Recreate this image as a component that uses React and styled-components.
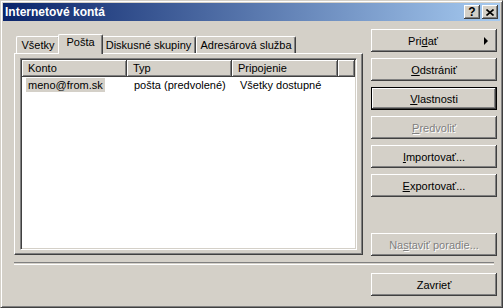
import React from "react"
import styled, { createGlobalStyle, css } from "styled-components"

const GlobalStyle = createGlobalStyle`
  body {
    margin: 0;
    background: #d4d0c8;
    font-family: "Liberation Sans", Arial, sans-serif;
    font-size: 11px;
  }
`

const raised = css`
  background: #d4d0c8;
  box-shadow: inset -1px -1px #404040, inset 1px 1px #fff, inset -2px -2px #808080;
`

const Window = styled.div`
  width: 503px;
  height: 308px;
  box-sizing: border-box;
  background: #d4d0c8;
  border: 1px solid;
  border-color: #d4d0c8 #404040 #404040 #d4d0c8;
  box-shadow: inset 1px 1px #fff, inset -1px -1px #808080;
  padding: 2px;
  display: flex;
  flex-direction: column;
`

const TitleBar = styled.div`
  height: 18px;
  display: flex;
  align-items: center;
  padding: 0 2px;
  background: linear-gradient(to right, #0a246a, #a6caf0);
`

const Title = styled.span`
  flex: 1;
  color: #fff;
  font-weight: bold;
  font-size: 12px;
`

const TitleButton = styled.div`
  ${raised}
  width: 16px;
  height: 14px;
  margin-left: ${p => p.$gap || 0}px;
  display: flex;
  align-items: center;
  justify-content: center;
  font-weight: bold;
  font-size: 12px;
  line-height: 14px;
  color: #000;
`

const Body = styled.div`
  flex: 1;
  display: flex;
  flex-direction: column;
  padding: 8px 3px 0 11px;
`

const TopSection = styled.div`
  display: flex;
  gap: 8px;
`

const TabControl = styled.div`
  width: 349px;
  margin-top: 5px;
  display: flex;
  flex-direction: column;
`

const TabRow = styled.div`
  height: 19px;
  display: flex;
  align-items: flex-end;
  padding-left: 2px;
`

const Tab = styled.div`
  position: relative;
  box-sizing: border-box;
  width: ${p => p.$w}px;
  height: 17px;
  background: #d4d0c8;
  border-top: 1px solid #fff;
  border-left: 1px solid #fff;
  border-right: 1px solid #404040;
  border-radius: 2px 2px 0 0;
  box-shadow: inset -1px 0 #808080;
  display: flex;
  justify-content: center;
  line-height: 15px;
  padding-top: 1px;
  ${p => p.$active && css`
    height: 20px;
    margin: 0 -2px -1px;
    padding-top: 0;
    z-index: 1;
  `}
`

const Panel = styled.div`
  height: 202px;
  box-sizing: border-box;
  border-top: 1px solid #fff;
  border-left: 1px solid #fff;
  border-right: 1px solid #404040;
  border-bottom: 1px solid #404040;
  box-shadow: inset -1px -1px #808080;
  padding: 4px 5px 4px 5px;
  display: flex;
`

const ListView = styled.div`
  flex: 1;
  background: #fff;
  border: 1px solid;
  border-color: #808080 #fff #fff #808080;
  box-shadow: inset 1px 1px #404040, inset -1px -1px #d4d0c8;
  padding: 1px;
  display: flex;
  flex-direction: column;
`

const HeaderRow = styled.div`
  display: flex;
  height: 17px;
`

const HeaderCell = styled.div`
  ${raised}
  box-sizing: border-box;
  width: ${p => (p.$w ? `${p.$w}px` : "auto")};
  flex: ${p => (p.$w ? "none" : 1)};
  padding-left: 6px;
  line-height: 16px;
`

const Row = styled.div`
  display: flex;
  height: 14px;
  margin-top: 1px;
  line-height: 14px;
`

const Cell = styled.div`
  width: ${p => p.$w}px;
  padding-left: ${p => p.$pad}px;
  box-sizing: border-box;
  white-space: nowrap;
`

const Selected = styled.span`
  display: inline-block;
  background: #d4d0c8;
  padding: 0 2px;
`

const ButtonColumn = styled.div`
  width: 126px;
  height: 227px;
  display: flex;
  flex-direction: column;
  gap: 6px;
`

const Button = styled.button`
  position: relative;
  width: 126px;
  height: 23px;
  flex: none;
  box-sizing: border-box;
  border: none;
  padding: 0;
  font-family: "Liberation Sans", Arial, sans-serif;
  font-size: 11px;
  color: #000;
  ${raised}
  ${p => p.$default && css`
    box-shadow: inset 0 0 0 1px #000, inset -2px -2px #404040, inset 2px 2px #fff, inset -3px -3px #808080;
  `}
  ${p => p.disabled && css`
    color: #808080;
    text-shadow: 1px 1px #fff;
  `}
  ${p => p.$bottom && css`
    margin-top: auto;
  `}
  ${p => p.$menu && css`
    padding-right: 22px;
  `}
`

const Arrow = styled.span`
  position: absolute;
  right: 9px;
  top: 8px;
  width: 0;
  height: 0;
  border-top: 4px solid transparent;
  border-bottom: 4px solid transparent;
  border-left: 4px solid #000;
`

const Separator = styled.div`
  height: 1px;
  margin: 6px 3px 0 0;
  border-top: 1px solid #808080;
  border-bottom: 1px solid #fff;
`

const BottomRow = styled.div`
  display: flex;
  justify-content: flex-end;
  margin-top: 8px;
`

export default function App() {
  return (
    <>
      <GlobalStyle />
      <Window>
        <TitleBar>
          <Title>Internetové kontá</Title>
          <TitleButton>?</TitleButton>
          <TitleButton $gap={2}>
            <svg width="8" height="7" viewBox="0 0 8 7">
              <path d="M0.5 0.5 L7.5 6.5 M7.5 0.5 L0.5 6.5" stroke="#000" strokeWidth="1.6" />
            </svg>
          </TitleButton>
        </TitleBar>
        <Body>
          <TopSection>
            <TabControl>
              <TabRow>
                <Tab $w={44}>Všetky</Tab>
                <Tab $w={45} $active>Pošta</Tab>
                <Tab $w={95}>Diskusné skupiny</Tab>
                <Tab $w={100}>Adresárová služba</Tab>
              </TabRow>
              <Panel>
                <ListView>
                  <HeaderRow>
                    <HeaderCell $w={105}>Konto</HeaderCell>
                    <HeaderCell $w={105}>Typ</HeaderCell>
                    <HeaderCell $w={106}>Pripojenie</HeaderCell>
                    <HeaderCell />
                  </HeaderRow>
                  <Row>
                    <Cell $w={105} $pad={4}>
                      <Selected>meno@from.sk</Selected>
                    </Cell>
                    <Cell $w={105} $pad={7}>pošta (predvolené)</Cell>
                    <Cell $w={106} $pad={8}>Všetky dostupné</Cell>
                  </Row>
                </ListView>
              </Panel>
            </TabControl>
            <ButtonColumn>
              <Button $menu>
                Pri<u>d</u>ať
                <Arrow />
              </Button>
              <Button><u>O</u>dstrániť</Button>
              <Button $default><u>V</u>lastnosti</Button>
              <Button disabled><u>P</u>redvoliť</Button>
              <Button><u>I</u>mportovať...</Button>
              <Button><u>E</u>xportovať...</Button>
              <Button disabled $bottom>Na<u>s</u>taviť poradie...</Button>
            </ButtonColumn>
          </TopSection>
          <Separator />
          <BottomRow>
            <Button>Zavrieť</Button>
          </BottomRow>
        </Body>
      </Window>
    </>
  )
}
